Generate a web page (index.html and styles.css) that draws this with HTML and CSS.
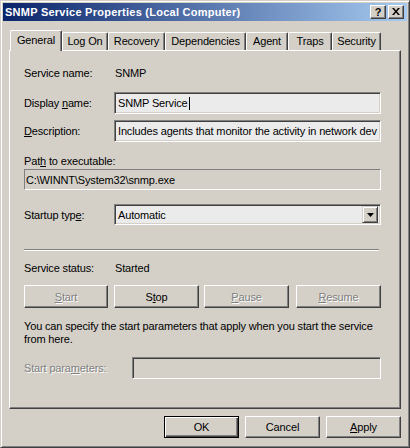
FILE: index.html
```html
<!DOCTYPE html>
<html>
<head>
<meta charset="utf-8">
<link rel="stylesheet" href="styles.css">
</head>
<body>
<div class="window">
  <div class="titlebar">
    <span class="title">SNMP Service Properties (Local Computer)</span>
    <span class="tbtn help">?</span>
    <span class="tbtn close"><svg width="8" height="7" viewBox="0 0 8 7"><path d="M0 0h2l2 2.5L6 0h2L5 3.5 8 7H6L4 4.5 2 7H0l3-3.5z" fill="#000"/></svg></span>
  </div>
  <div class="tabs">
    <div class="tab sel t-general">General</div>
    <div class="tab t-logon">Log On</div>
    <div class="tab t-recovery">Recovery</div>
    <div class="tab t-deps">Dependencies</div>
    <div class="tab t-agent">Agent</div>
    <div class="tab t-traps">Traps</div>
    <div class="tab t-security">Security</div>
  </div>
  <div class="panel">
    <div class="row r-service">
      <span class="label">Service name:</span>
      <span class="value">SNMP</span>
    </div>
    <div class="row r-display">
      <span class="label">Display <u>n</u>ame:</span>
      <div class="edit">SNMP Service<span class="caret"></span></div>
    </div>
    <div class="row r-desc">
      <span class="label"><u>D</u>escription:</span>
      <div class="edit">Includes agents that monitor the activity in network dev</div>
    </div>
    <div class="path-label">Pat<u>h</u> to executable:</div>
    <div class="path-box">C:\WINNT\System32\snmp.exe</div>
    <div class="row r-startup">
      <span class="label">Startup typ<u>e</u>:</span>
      <div class="combo">
        <span class="combo-text">Automatic</span>
        <span class="dd"><svg width="7" height="4" viewBox="0 0 7 4"><path d="M0 0h7L3.5 4z" fill="#000"/></svg></span>
      </div>
    </div>
    <div class="sep"></div>
    <div class="row r-status">
      <span class="label">Service status:</span>
      <span class="value">Started</span>
    </div>
    <div class="svc-buttons">
      <div class="btn b-start disabled"><span><u>S</u>tart</span></div>
      <div class="btn b-stop">S<u>t</u>op</div>
      <div class="btn b-pause disabled"><span><u>P</u>ause</span></div>
      <div class="btn b-resume disabled"><span><u>R</u>esume</span></div>
    </div>
    <p class="note">You can specify the start parameters that apply when you start the service<br>from here.</p>
    <div class="row r-params">
      <span class="label params-label disabled-text">Start para<u>m</u>eters:</span>
      <div class="edit edit-disabled"></div>
    </div>
  </div>
  <div class="footer">
    <div class="btn default">OK</div>
    <div class="btn">Cancel</div>
    <div class="btn"><u>A</u>pply</div>
  </div>
</div>
</body>
</html>
```

FILE: styles.css
```css
* { box-sizing: border-box; }
html, body { margin: 0; padding: 0; background: #d4d0c8; }
body {
  font-family: "Liberation Sans", Arial, sans-serif;
  font-size: 11px;
  letter-spacing: -0.15px;
  color: #000;
}
u { text-decoration: underline; text-underline-offset: 1px; }

.window {
  width: 410px;
  height: 448px;
  background: #d4d0c8;
  border: 1px solid;
  border-color: #d4d0c8 #404040 #404040 #d4d0c8;
  box-shadow: inset 1px 1px #ffffff, inset -1px -1px #808080;
  padding: 2px;
  display: flex;
  flex-direction: column;
}

.titlebar {
  height: 18px;
  background: linear-gradient(to right, #0a246a, #a6caf0);
  display: flex;
  align-items: center;
  padding: 0 3px 0 2px;
}
.title {
  color: #fff;
  font-weight: bold;
  font-size: 11px;
  letter-spacing: 0.25px;
  flex: 1;
  white-space: nowrap;
}
.tbtn {
  width: 16px;
  height: 14px;
  background: #d4d0c8;
  border: 1px solid;
  border-color: #fff #404040 #404040 #fff;
  box-shadow: inset -1px -1px #808080;
  display: flex;
  align-items: center;
  justify-content: center;
  font-weight: bold;
  font-size: 11px;
  letter-spacing: 0;
  line-height: 1;
}
.help { margin-right: 2px; }
.close svg { display: block; margin-top: -1px; }

.tabs {
  margin: 9px 0 0 7px;
  height: 20px;
  display: flex;
  align-items: flex-end;
}
.tab {
  height: 18px;
  border: 1px solid;
  border-bottom: none;
  border-color: #fff #404040 #fff #fff;
  box-shadow: inset -1px 0 #808080;
  border-radius: 2px 2px 0 0;
  display: flex;
  align-items: center;
  justify-content: center;
  padding-bottom: 1px;
  white-space: nowrap;
}
.tab.sel {
  height: 21px;
  margin-bottom: -1px;
  background: #d4d0c8;
  position: relative;
  z-index: 1;
  padding-bottom: 3px;
}
.t-general { width: 52px; }
.t-logon { width: 46px; }
.t-recovery { width: 57px; }
.t-deps { width: 81px; }
.t-agent { width: 42px; }
.t-traps { width: 44px; }
.t-security { width: 49px; }

.panel {
  margin-left: 6px;
  width: 392px;
  height: 359px;
  border: 1px solid;
  border-color: #fff #404040 #404040 #fff;
  box-shadow: inset -1px -1px #808080;
  padding: 11px 19px 0 14px;
  display: flex;
  flex-direction: column;
}

.row {
  display: flex;
  align-items: center;
  height: 22px;
}
.label { width: 90px; flex: none; white-space: nowrap; }
.value { padding-left: 1px; }
.r-display { margin-top: 8px; }
.r-desc { margin-top: 6px; }

.edit {
  flex: 1;
  height: 22px;
  background: #ebebeb;
  border: 1px solid;
  border-color: #808080 #fff #fff #808080;
  box-shadow: inset 1px 1px #404040, inset -1px -1px #d4d0c8;
  padding: 0 2px 0 3px;
  display: flex;
  align-items: center;
  white-space: nowrap;
  overflow: hidden;
}
.caret {
  display: inline-block;
  width: 1px;
  height: 13px;
  background: #000;
  margin-left: 1px;
}

.path-label {
  margin-top: 13px;
  height: 13px;
  line-height: 13px;
}
.path-box {
  margin-top: 1px;
  height: 21px;
  border: 1px solid;
  border-color: #808080 #fff #fff #808080;
  display: flex;
  align-items: center;
  padding: 0 1px;
  white-space: nowrap;
}

.r-startup { margin-top: 14px; height: 21px; }
.combo {
  flex: 1;
  height: 21px;
  background: #ebebeb;
  border: 1px solid;
  border-color: #808080 #fff #fff #808080;
  box-shadow: inset 1px 1px #404040, inset -1px -1px #d4d0c8;
  display: flex;
  align-items: center;
  padding: 2px 2px 2px 3px;
}
.combo-text { flex: 1; }
.dd {
  width: 16px;
  height: 17px;
  background: #d4d0c8;
  border: 1px solid;
  border-color: #d4d0c8 #404040 #404040 #d4d0c8;
  box-shadow: inset 1px 1px #fff, inset -1px -1px #808080;
  display: flex;
  align-items: center;
  justify-content: center;
}
.dd svg { display: block; }

.sep {
  margin-top: 24px;
  width: 355px;
  height: 2px;
  border-top: 1px solid #808080;
  border-bottom: 1px solid #fff;
}

.r-status { margin-top: 10px; height: 13px; }

.svc-buttons {
  margin-top: 11px;
  display: flex;
}
.btn {
  height: 23px;
  background: #d4d0c8;
  border: 1px solid;
  border-color: #fff #404040 #404040 #fff;
  box-shadow: inset -1px -1px #808080;
  display: flex;
  align-items: center;
  justify-content: center;
  white-space: nowrap;
}
.b-start { width: 84px; }
.b-stop { width: 85px; margin-left: 6px; }
.b-pause { width: 85px; margin-left: 5px; }
.b-resume { width: 85px; margin-left: 7px; }
.disabled, .disabled-text {
  color: #808080;
  text-shadow: 1px 1px 0 #fff;
}

.note {
  margin: 12px 0 0 0;
  line-height: 13px;
  white-space: nowrap;
}

.r-params { margin-top: 11px; }
.params-label { width: 108px; }
.edit-disabled { background: #d4d0c8; }

.footer {
  margin-top: 7px;
  display: flex;
  justify-content: flex-end;
  gap: 6px;
  padding-right: 6px;
}
.footer .btn { width: 75px; height: 22px; }
.footer .btn.default {
  border-color: #000;
  box-shadow: inset 1px 1px #fff, inset -1px -1px #404040, inset -2px -2px #808080;
}
```
